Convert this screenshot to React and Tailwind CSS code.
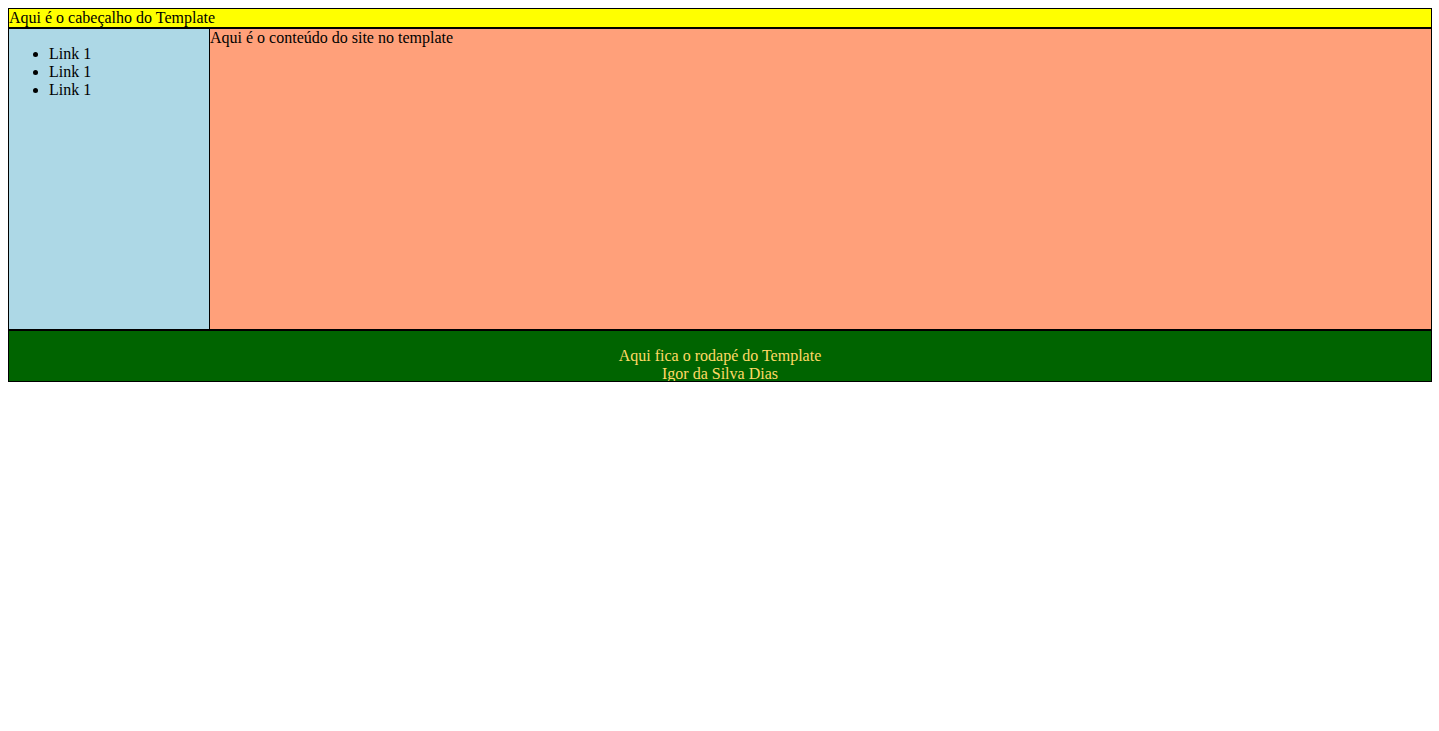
export default function App() {
  const links = ["Link 1", "Link 1", "Link 1"];

  return (
    <div className="pt-2 pl-2 pr-[7px] font-['Liberation_Serif',serif] text-base leading-[normal] text-black">
      <div className="border border-black bg-[#ffff00]">Aqui é o cabeçalho do Template</div>

      <div className="flex">
        <div className="w-[202px] h-[302px] border border-black bg-[#add8e6]">
          <ul className="mt-4 pl-10 list-disc">
            {links.map((l, i) => (
              <li key={i}>{l}</li>
            ))}
          </ul>
        </div>
        <div className="flex-1 h-[302px] border-y border-r border-black bg-[#ffa07a]">
          Aqui é o conteúdo do site no template
        </div>
      </div>

      <div className="h-[52px] overflow-hidden border border-black bg-[#006400] text-center text-[#ffd966]">
        <p className="mt-4">
          Aqui fica o rodapé do Template
          <br />
          Igor da Silva Dias
        </p>
      </div>
    </div>
  );
}
